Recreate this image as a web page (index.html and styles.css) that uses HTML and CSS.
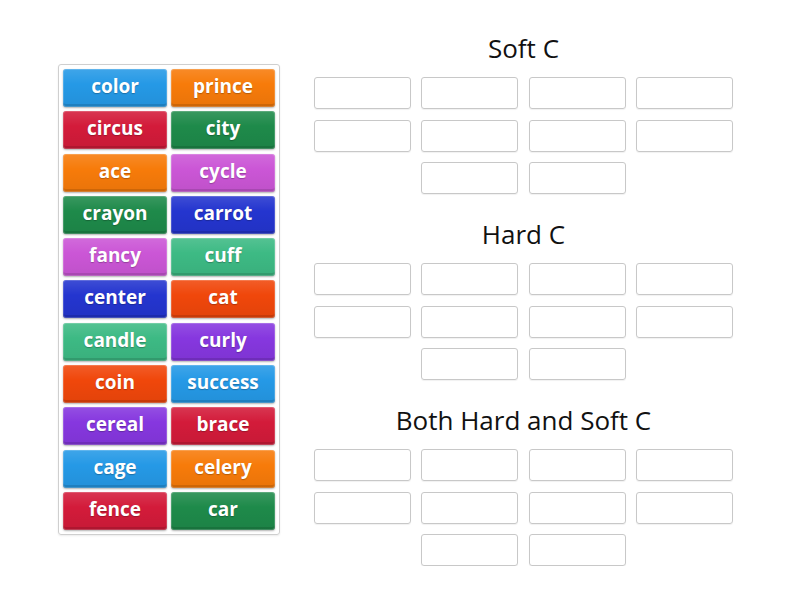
FILE: index.html
```html
<!DOCTYPE html>
<html>
<head>
<meta charset="utf-8">
<link rel="stylesheet" href="styles.css">
</head>
<body>
<div class="page">
  <div class="bank">
    <div class="tile blue">color</div>
    <div class="tile orange">prince</div>
    <div class="tile red">circus</div>
    <div class="tile green">city</div>
    <div class="tile orange">ace</div>
    <div class="tile pink">cycle</div>
    <div class="tile green">crayon</div>
    <div class="tile navy">carrot</div>
    <div class="tile pink">fancy</div>
    <div class="tile teal">cuff</div>
    <div class="tile navy">center</div>
    <div class="tile redorange">cat</div>
    <div class="tile teal">candle</div>
    <div class="tile violet">curly</div>
    <div class="tile redorange">coin</div>
    <div class="tile blue">success</div>
    <div class="tile violet">cereal</div>
    <div class="tile red">brace</div>
    <div class="tile blue">cage</div>
    <div class="tile orange">celery</div>
    <div class="tile red">fence</div>
    <div class="tile green">car</div>
  </div>
  <div class="groups">
    <section class="group">
      <h2 class="title">Soft C</h2>
      <div class="slots">
        <div class="slot"></div><div class="slot"></div><div class="slot"></div><div class="slot"></div>
        <div class="slot"></div><div class="slot"></div><div class="slot"></div><div class="slot"></div>
        <div class="slot c2"></div><div class="slot"></div>
      </div>
    </section>
    <section class="group">
      <h2 class="title">Hard C</h2>
      <div class="slots">
        <div class="slot"></div><div class="slot"></div><div class="slot"></div><div class="slot"></div>
        <div class="slot"></div><div class="slot"></div><div class="slot"></div><div class="slot"></div>
        <div class="slot c2"></div><div class="slot"></div>
      </div>
    </section>
    <section class="group">
      <h2 class="title">Both Hard and Soft C</h2>
      <div class="slots">
        <div class="slot"></div><div class="slot"></div><div class="slot"></div><div class="slot"></div>
        <div class="slot"></div><div class="slot"></div><div class="slot"></div><div class="slot"></div>
        <div class="slot c2"></div><div class="slot"></div>
      </div>
    </section>
  </div>
</div>
</body>
</html>
```

FILE: styles.css
```css
html, body {
  margin: 0;
  padding: 0;
  background: #ffffff;
}
body {
  font-family: "Open Sans", "Liberation Sans", sans-serif;
}
.page {
  display: flex;
  align-items: flex-start;
  gap: 34px;
  padding: 32px 0 0 58px;
}
.bank {
  margin-top: 32px;
  width: 212px;
  border: 1px solid #cfcfcf;
  border-radius: 3px;
  padding: 4px;
  display: grid;
  grid-template-columns: 104px 104px;
  grid-auto-rows: 38px;
  column-gap: 4px;
  row-gap: 4.3px;
  box-shadow: 0 1px 2px rgba(0,0,0,0.08);
}
.tile {
  border-radius: 3px;
  color: #fff;
  font-weight: 700;
  font-size: 19px;
  line-height: 35px;
  text-align: center;
  text-shadow: 0 1px 1px rgba(0,0,0,0.25);
  box-shadow: inset 0 0 0 1px rgba(255,255,255,0.18), inset 0 -3px 0 rgba(0,0,0,0.12), 0 1px 2px rgba(0,0,0,0.3);
  background-image: linear-gradient(to bottom, rgba(255,255,255,0.12), rgba(255,255,255,0) 40%, rgba(0,0,0,0.06));
}
.blue { background-color: #2599e6; }
.orange { background-color: #f77b0a; }
.red { background-color: #d31b3a; }
.green { background-color: #1e8a4a; }
.pink { background-color: #cb56d6; }
.navy { background-color: #2435cf; }
.teal { background-color: #3dba84; }
.redorange { background-color: #f0470b; }
.violet { background-color: #8637df; }

.groups {
  width: 419px;
  display: flex;
  flex-direction: column;
  gap: 24px;
}
.title {
  margin: 0 0 13px 0;
  font-weight: 400;
  font-size: 26px;
  line-height: 32px;
  text-align: center;
  color: #111;
}
.slots {
  display: grid;
  grid-template-columns: repeat(4, 97px);
  grid-auto-rows: 32px;
  column-gap: 10.3px;
  row-gap: 10.5px;
}
.slot {
  box-sizing: border-box;
  border: 1px solid #c8c8c8;
  border-radius: 3px;
  box-shadow: 0 1px 1px rgba(0,0,0,0.06);
}
.c2 {
  grid-column-start: 2;
}
```
